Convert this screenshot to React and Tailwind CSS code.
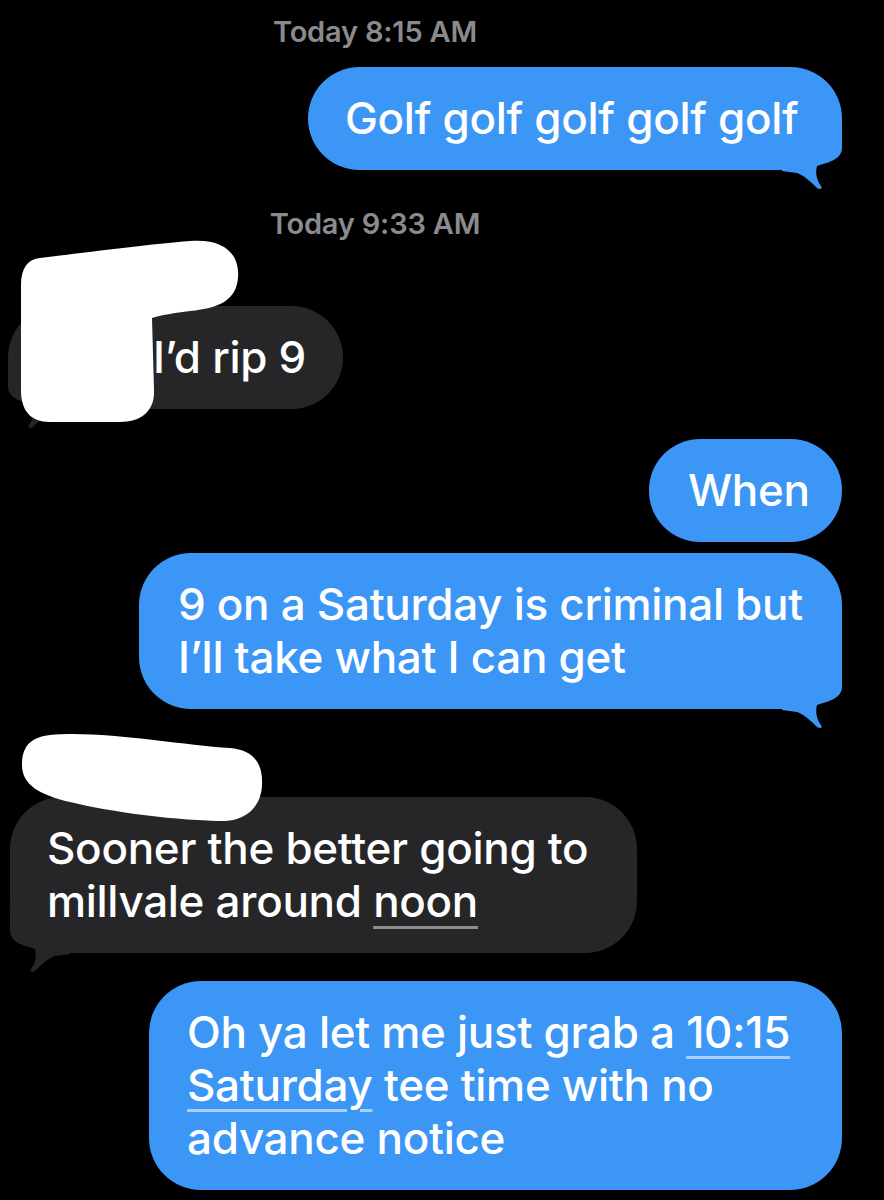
import React from "react";

const BLUE = "#3b96f6";
const GRAY = "#262628";

function SentTail({ color }) {
  return (
    <svg
      className="absolute right-0 bottom-[-20px]"
      width="60"
      height="72"
      viewBox="-60 -52 60 72"
      aria-hidden="true"
    >
      <path
        d="M -60,-52 L 0,-52 L 0,-22 C 0,-10 -16,-7 -25,-4 C -27,3 -25,11 -21,16 C -19,19 -22,20 -25,18 C -31,12 -37,6 -45,3 L -60,1 Z"
        fill={color}
      />
    </svg>
  );
}

function RecvTail({ color }) {
  return (
    <svg
      className="absolute left-0 bottom-[-20px]"
      width="60"
      height="72"
      viewBox="0 -52 60 72"
      aria-hidden="true"
    >
      <path
        d="M 60,-52 L 0,-52 L 0,-22 C 0,-10 16,-7 25,-4 C 27,3 25,11 21,16 C 19,19 22,20 25,18 C 31,12 37,6 45,3 L 60,1 Z"
        fill={color}
      />
    </svg>
  );
}

function Stamp({ children, className }) {
  return (
    <div
      className={`w-[750px] text-center text-[29px] leading-[32px] font-semibold tracking-[-0.2px] text-[#8a8a8f] ${className}`}
    >
      {children}
    </div>
  );
}

export default function App() {
  return (
    <div
      className="relative w-[884px] h-[1200px] overflow-hidden bg-black text-white"
      style={{ fontFamily: "Inter, 'Noto Sans', sans-serif" }}
    >
      <div className="flex flex-col text-[44px] leading-[53px] font-medium tracking-[-0.3px]">
        <Stamp className="mt-[16px]">Today 8:15 AM</Stamp>

        <div className="self-end mr-[42px] mt-[19px] relative">
          <div
            className="relative z-10 w-[534px] rounded-[52px] py-[25px] pl-[37px] whitespace-nowrap"
            style={{ backgroundColor: BLUE }}
          >
            Golf golf golf golf golf
          </div>
          <SentTail color={BLUE} />
        </div>

        <Stamp className="mt-[38px]">Today 9:33 AM</Stamp>

        <div className="self-start ml-[8px] mt-[66px] relative">
          <div
            className="relative z-10 w-[335px] rounded-[52px] py-[25px] pl-[145px] whitespace-nowrap"
            style={{ backgroundColor: GRAY }}
          >
            I’d rip 9
          </div>
          <RecvTail color={GRAY} />
        </div>

        <div
          className="self-end mr-[42px] mt-[30px] w-[193px] rounded-[51px] py-[25px] pl-[39px] whitespace-nowrap"
          style={{ backgroundColor: BLUE }}
        >
          When
        </div>

        <div className="self-end mr-[42px] mt-[11px] relative">
          <div
            className="relative z-10 w-[703px] rounded-[52px] py-[25px] pl-[39px] whitespace-nowrap"
            style={{ backgroundColor: BLUE }}
          >
            9 on a Saturday is criminal but
            <br />
            I’ll take what I can get
          </div>
          <SentTail color={BLUE} />
        </div>

        <div className="self-start ml-[10px] mt-[88px] relative">
          <div
            className="relative z-10 w-[627px] rounded-[52px] py-[25px] pl-[37px] whitespace-nowrap"
            style={{ backgroundColor: GRAY }}
          >
            Sooner the better going to
            <br />
            millvale around{" "}
            <span className="underline decoration-[3px] underline-offset-[9px] decoration-[#8d8d92]">
              noon
            </span>
          </div>
          <RecvTail color={GRAY} />
        </div>

        <div
          className="self-end mr-[42px] mt-[28px] w-[693px] rounded-[52px] py-[25px] pl-[38px] whitespace-nowrap"
          style={{ backgroundColor: BLUE }}
        >
          Oh ya let me just grab a{" "}
          <span className="underline decoration-[3px] underline-offset-[8px] decoration-[#a9d1fb]">
            10:15
            <br />
            Saturday
          </span>{" "}
          tee time with no
          <br />
          advance notice
        </div>
      </div>

      <svg
        className="absolute left-0 top-0 z-20 pointer-events-none"
        width="884"
        height="1200"
        aria-hidden="true"
      >
        <path
          d="M 40,258 C 90,252 150,244 190,241 C 225,238 240,255 238,278 C 236,300 220,308 190,311 C 175,313 160,315 152,318 L 154,390 C 155,412 140,422 120,422 L 50,422 C 30,422 21,410 21,390 L 21,285 C 21,268 28,259 40,258 Z"
          fill="#ffffff"
        />
        <path
          d="M 50,735 C 100,730 180,745 230,748 C 255,750 263,765 262,785 C 261,808 245,820 225,821 C 180,821 110,812 70,802 C 40,795 22,785 22,765 C 22,745 32,737 50,735 Z"
          fill="#ffffff"
        />
      </svg>
    </div>
  );
}
